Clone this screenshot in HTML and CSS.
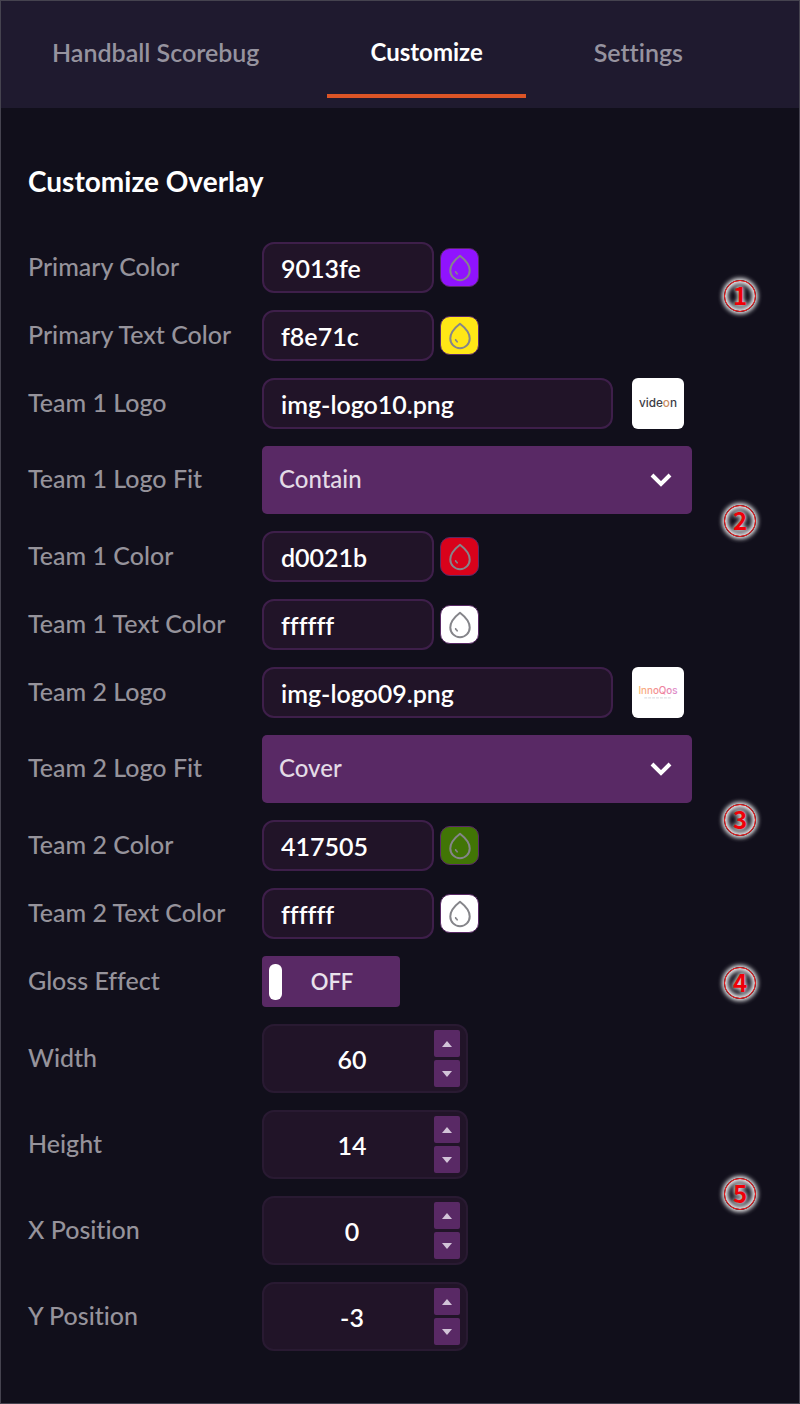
FILE: index.html
```html
<!DOCTYPE html>
<html lang="en">
<head>
  <meta charset="UTF-8">
  <meta name="viewport" content="width=device-width, initial-scale=1.0">
  <title>Handball Scorebug - Customize</title>
  <link rel="stylesheet" href="styles.css">
</head>
<body>

<svg class="defs" width="0" height="0" aria-hidden="true">
  <symbol id="drop" viewBox="0 0 24 28">
    <path d="M12 1.800C8.500 4.500 2.300 10 2.300 16.500a9.700 9.700 0 0 0 19.400 0C21.700 10 15.500 4.500 12 1.800z" fill="none" stroke="#85858a" stroke-width="2" stroke-linejoin="round"/>
    <path d="M7.500 17c.3.900 1.800 1.200 2 3.200-1.500-.3-2.600-1.600-2-3.200z" fill="#85858a" stroke="#85858a" stroke-linejoin="round"/>
  </symbol>
</svg>

<div class="panel">
  <nav class="tabs">
    <a href="#scorebug" class="tab">Handball Scorebug</a>
    <a href="#customize" class="tab active">Customize</a>
    <a href="#settings" class="tab">Settings</a>
  </nav>

  <main id="customize">
    <h1>Customize Overlay</h1>

    <form class="fields">
      <div class="row">
        <label for="primary">Primary Color</label>
        <div class="field">
          <input type="text" class="text color" id="primary" value="9013fe">
          <button type="button" class="swatch purple" aria-label="Pick primary color"><svg><use href="#drop"/></svg></button>
        </div>
      </div>

      <div class="row">
        <label for="primary-text">Primary Text Color</label>
        <div class="field">
          <input type="text" class="text color" id="primary-text" value="f8e71c">
          <button type="button" class="swatch yellow" aria-label="Pick primary text color"><svg><use href="#drop"/></svg></button>
        </div>
      </div>

      <div class="row">
        <label for="logo1">Team 1 Logo</label>
        <div class="field file">
          <input type="text" class="text" id="logo1" value="img-logo10.png">
          <div class="thumb">
            <svg viewBox="0 0 52 52">
              <text x="26" y="30" text-anchor="middle" class="videon">vide<tspan class="orange">o</tspan>n</text>
            </svg>
          </div>
        </div>
      </div>

      <div class="row">
        <label for="fit1">Team 1 Logo Fit</label>
        <div class="field select">
          <select id="fit1">
            <option selected>Contain</option>
            <option>Cover</option>
          </select>
          <svg class="chevron" viewBox="0 0 22 14"><path d="M2 2l9 9 9-9"/></svg>
        </div>
      </div>

      <div class="row">
        <label for="team1">Team 1 Color</label>
        <div class="field">
          <input type="text" class="text color" id="team1" value="d0021b">
          <button type="button" class="swatch red" aria-label="Pick team 1 color"><svg><use href="#drop"/></svg></button>
        </div>
      </div>

      <div class="row">
        <label for="team1-text">Team 1 Text Color</label>
        <div class="field">
          <input type="text" class="text color" id="team1-text" value="ffffff">
          <button type="button" class="swatch white" aria-label="Pick team 1 text color"><svg><use href="#drop"/></svg></button>
        </div>
      </div>

      <div class="row">
        <label for="logo2">Team 2 Logo</label>
        <div class="field file">
          <input type="text" class="text" id="logo2" value="img-logo09.png">
          <div class="thumb">
            <svg viewBox="0 0 52 52">
              <linearGradient id="warm" x1="0" x2="1">
                <stop offset="0" stop-color="#f9b877"/>
                <stop offset="0.600" stop-color="#f0809a"/>
                <stop offset="1" stop-color="#d98ad0"/>
              </linearGradient>
              <text x="26" y="28" text-anchor="middle" class="innoqos" fill="url(#warm)">InnoQos</text>
              <path d="M12 31.500h28" stroke="#d5d5dc" stroke-width="1" stroke-dasharray="3 1"/>
            </svg>
          </div>
        </div>
      </div>

      <div class="row">
        <label for="fit2">Team 2 Logo Fit</label>
        <div class="field select">
          <select id="fit2">
            <option>Contain</option>
            <option selected>Cover</option>
          </select>
          <svg class="chevron" viewBox="0 0 22 14"><path d="M2 2l9 9 9-9"/></svg>
        </div>
      </div>

      <div class="row">
        <label for="team2">Team 2 Color</label>
        <div class="field">
          <input type="text" class="text color" id="team2" value="417505">
          <button type="button" class="swatch green" aria-label="Pick team 2 color"><svg><use href="#drop"/></svg></button>
        </div>
      </div>

      <div class="row">
        <label for="team2-text">Team 2 Text Color</label>
        <div class="field">
          <input type="text" class="text color" id="team2-text" value="ffffff">
          <button type="button" class="swatch white" aria-label="Pick team 2 text color"><svg><use href="#drop"/></svg></button>
        </div>
      </div>

      <div class="row">
        <label for="gloss">Gloss Effect</label>
        <div class="field">
          <div class="toggle">
            <input type="checkbox" id="gloss">
            <span>OFF</span>
          </div>
        </div>
      </div>

      <div class="row">
        <label for="width">Width</label>
        <div class="field">
          <div class="stepper">
            <input type="number" id="width" value="60">
            <div class="arrows">
              <button type="button" aria-label="Increase width"><svg viewBox="0 0 10 6"><path d="M0 6l5-6 5 6z"/></svg></button>
              <button type="button" aria-label="Decrease width"><svg viewBox="0 0 10 6"><path d="M0 0l5 6 5-6z"/></svg></button>
            </div>
          </div>
        </div>
      </div>

      <div class="row">
        <label for="height">Height</label>
        <div class="field">
          <div class="stepper">
            <input type="number" id="height" value="14">
            <div class="arrows">
              <button type="button" aria-label="Increase height"><svg viewBox="0 0 10 6"><path d="M0 6l5-6 5 6z"/></svg></button>
              <button type="button" aria-label="Decrease height"><svg viewBox="0 0 10 6"><path d="M0 0l5 6 5-6z"/></svg></button>
            </div>
          </div>
        </div>
      </div>

      <div class="row">
        <label for="xpos">X Position</label>
        <div class="field">
          <div class="stepper">
            <input type="number" id="xpos" value="0">
            <div class="arrows">
              <button type="button" aria-label="Increase X position"><svg viewBox="0 0 10 6"><path d="M0 6l5-6 5 6z"/></svg></button>
              <button type="button" aria-label="Decrease X position"><svg viewBox="0 0 10 6"><path d="M0 0l5 6 5-6z"/></svg></button>
            </div>
          </div>
        </div>
      </div>

      <div class="row">
        <label for="ypos">Y Position</label>
        <div class="field">
          <div class="stepper">
            <input type="number" id="ypos" value="-3">
            <div class="arrows">
              <button type="button" aria-label="Increase Y position"><svg viewBox="0 0 10 6"><path d="M0 6l5-6 5 6z"/></svg></button>
              <button type="button" aria-label="Decrease Y position"><svg viewBox="0 0 10 6"><path d="M0 0l5 6 5-6z"/></svg></button>
            </div>
          </div>
        </div>
      </div>
    </form>
  </main>

  <span class="pin pin-1">1</span>
  <span class="pin pin-2">2</span>
  <span class="pin pin-3">3</span>
  <span class="pin pin-4">4</span>
  <span class="pin pin-5">5</span>
</div>

</body>
</html>
```
FILE: styles.css
```css
* {
  box-sizing: border-box;
}
body {
  margin: 0;
  background-color: #110f1b;
  color: #fff;
  font-family: Lato, "Open Sans", sans-serif;
  font-size: 25px;
  font-variant-ligatures: no-common-ligatures;
}
input, select, button {
  font: inherit;
  color: inherit;
  margin: 0;
}
.defs {
  position: absolute;
}
.panel {
  position: relative;
  min-height: 100vh;
  border: 1px solid #45434f;
}

/* Tabs */
.tabs {
  display: flex;
  gap: 25px;
  height: 107px;
  padding: 0 8px;
  background-color: #1f1a2f;
}
.tab {
  display: flex;
  align-items: center;
  height: 97px;
  padding: 8px 43px 0;
  border-bottom: 4px solid transparent;
  color: #96939f;
  font-weight: 600;
  text-decoration: none;
}
.tab.active {
  color: #fff;
  font-size: 24px;
  font-weight: 700;
  border-bottom-color: #db5426;
}

/* Form */
main {
  padding: 55px 107px 52px 27px;
}
h1 {
  margin: 0 0 43px;
  font-size: 28px;
  line-height: 36px;
  font-weight: 700;
}
.fields {
  display: flex;
  flex-direction: column;
  gap: 17px;
}
.row {
  display: grid;
  grid-template-columns: 234px 1fr;
  align-items: center;
}
.row label {
  color: #96939b;
  padding-bottom: 4px;
  font-weight: 500;
}
.field {
  display: flex;
  align-items: center;
  gap: 6px;
}
.text {
  height: 51px;
  width: 100%;
  min-width: 0;
  padding: 0 17px;
  background-color: #211428;
  border: 2px solid #3e1f4a;
  border-radius: 12px;
  font-weight: 600;
}
.color {
  width: 172px;
}
.swatch {
  display: flex;
  align-items: center;
  justify-content: center;
  width: 39px;
  height: 39px;
  padding: 0;
  border: 1px solid #592965;
  border-radius: 10px;
}
.swatch svg {
  width: 24px;
  height: 28px;
}
.purple { background-color: #9013fe; }
.yellow { background-color: #ffe716; }
.red { background-color: #d9021b; }
.white { background-color: #fff; }
.green { background-color: #417505; }

.file {
  gap: 19px;
  padding-right: 8px;
}
.thumb {
  flex: none;
  width: 52px;
  height: 51px;
  background-color: #fff;
  border-radius: 6px;
}
.thumb svg {
  display: block;
  width: 100%;
  height: 100%;
}
.videon {
  font: 500 12px Inter, sans-serif;
  fill: #3c3c46;
}
.orange {
  fill: #c98d62;
}
.innoqos {
  font: 500 10px Inter, sans-serif;
}

.select {
  position: relative;
}
select {
  appearance: none;
  width: 100%;
  height: 68px;
  padding: 0 17px 4px;
  background-color: #592965;
  border: none;
  border-radius: 5px;
  color: #e3dbe6;
  font-size: 24px;
  font-weight: 500;
}
.chevron {
  position: absolute;
  right: 20px;
  width: 22px;
  height: 14px;
  pointer-events: none;
}
.chevron path {
  fill: none;
  stroke: #fff;
  stroke-width: 4;
}

.toggle {
  display: flex;
  align-items: center;
  width: 138px;
  height: 51px;
  padding: 0 18px 0 7px;
  background-color: #592965;
  border-radius: 4px;
  font-size: 22px;
  color: #e9e2ec;
  font-weight: 600;
}
.toggle input {
  appearance: none;
  width: 13px;
  height: 36px;
  background-color: #fff;
  border-radius: 6px;
}
.toggle span {
  flex: 1;
  text-align: center;
}

.stepper {
  display: flex;
  width: 206px;
  height: 69px;
  padding: 4px 6px;
  background-color: #211428;
  border: 2px solid #291a32;
  border-radius: 12px;
}
.stepper input {
  flex: 1;
  min-width: 0;
  padding: 0;
  background: none;
  border: none;
  text-align: center;
  font-weight: 600;
  appearance: textfield;
}
.stepper input::-webkit-inner-spin-button {
  appearance: none;
}
.arrows {
  display: flex;
  flex-direction: column;
  gap: 3px;
  width: 26px;
}
.arrows button {
  display: flex;
  flex: 1;
  align-items: center;
  justify-content: center;
  padding: 0;
  background-color: #592965;
  border: none;
  border-radius: 2px;
}
.arrows svg {
  width: 10px;
  height: 6px;
  fill: #d2c3d8;
}

/* Numbered pins over the panel */
.pin {
  position: absolute;
  right: 43px;
  width: 32px;
  height: 32px;
  border: 1px solid #ff1a1a;
  border-radius: 50%;
  color: #f00008;
  font: 700 24px/28px "Noto Sans CJK JP", sans-serif;
  text-align: center;
  text-shadow: 0 0 4px #e8e8ea, 0 0 5px #e8e8ea;
  box-shadow: 0 0 4px 2px #e8e8ea, inset 0 0 4px 3px #e8e8ea;
}
.pin-1 { top: 279px; }
.pin-2 { top: 504px; }
.pin-3 { top: 803px; }
.pin-4 { top: 966px; }
.pin-5 { top: 1177px; }
```
